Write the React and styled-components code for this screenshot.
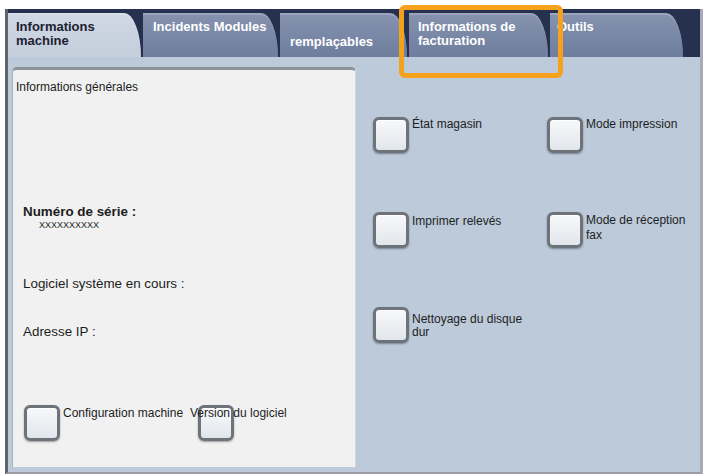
import styled, { createGlobalStyle } from "styled-components";

const GlobalStyle = createGlobalStyle`
  html, body {
    margin: 0;
    background: #ffffff;
  }
  body {
    font-family: "Liberation Sans", Arial, sans-serif;
  }
`;

const Frame = styled.div`
  position: relative;
  box-sizing: border-box;
  margin: 9px 7px 0 5px;
  height: 465px;
  display: flex;
  flex-direction: column;
  border-left: 3px solid #5f636a;
  border-right: 3px solid #a9aab8;
  border-bottom: 2px solid #9a9da4;
`;

const TabBar = styled.div`
  flex: none;
  height: 48px;
  box-sizing: border-box;
  padding-top: 4px;
  display: flex;
  gap: 2px;
  background: #25314e;
`;

const Tab = styled.div`
  flex: none;
  width: ${(p) => p.$w}px;
  box-sizing: border-box;
  padding: ${(p) => p.$top || 7}px 0 0 ${(p) => p.$pad || 9}px;
  border-top-right-radius: 17px 44px;
  background: ${(p) =>
    p.$active
      ? "linear-gradient(#d0d8e4, #c4cedc)"
      : "linear-gradient(#8593b0, #6f7d9e)"};
  box-shadow: inset 0 2px 0 rgba(255, 255, 255, 0.18);
  color: ${(p) => (p.$active ? "#1c2130" : "#ffffff")};
  font-size: 13px;
  font-weight: bold;
  line-height: 14px;
`;

const Highlight = styled.div`
  position: absolute;
  left: 391px;
  top: -4px;
  width: 164px;
  height: 73px;
  box-sizing: border-box;
  border: 5px solid #f6a11c;
  border-radius: 6px;
  pointer-events: none;
`;

const Content = styled.div`
  flex: 1;
  display: flex;
  padding: 10px 0 5px 4px;
  background: #bccada;
`;

const Panel = styled.div`
  flex: none;
  width: 344px;
  box-sizing: border-box;
  display: flex;
  flex-direction: column;
  background: #f1f1f1;
  border-top: 3px solid #8d929a;
  border-left: 1px solid #aab0b8;
  border-right: 1px solid #d3d7dc;
  border-radius: 5px 5px 0 0;
  color: #1b1d21;
`;

const PanelTitle = styled.div`
  margin: 10px 0 0 3px;
  font-size: 12px;
  line-height: 14px;
`;

const Field = styled.div`
  margin: ${(p) => p.$gap}px 0 0 10px;
  font-size: 13.4px;
  line-height: 16px;
  font-weight: ${(p) => (p.$bold ? "bold" : "normal")};
`;

const Serial = styled.div`
  margin-left: 26px;
  font-size: 9px;
  line-height: 10px;
`;

const PanelButtons = styled.div`
  display: flex;
  margin: 65px 0 0 11px;
`;

const ButtonGrid = styled.div`
  flex: 1;
  display: grid;
  grid-template-columns: 174px 174px;
  grid-auto-rows: 95px;
  align-content: start;
  padding: 50px 0 0 17px;
`;

const Option = styled.div`
  display: flex;
  align-items: flex-start;
  gap: 3px;
  width: ${(p) => (p.$w ? `${p.$w}px` : "auto")};
  flex: none;
`;

const Square = styled.div`
  flex: none;
  width: 36px;
  height: 36px;
  box-sizing: border-box;
  border: 3px solid #6d737b;
  border-radius: 6px;
  background: linear-gradient(#f7f8fa, #e2e6eb);
  box-shadow: 0 1px 2px rgba(0, 0, 0, 0.35), inset 0 1px 1px #ffffff;
`;

const Label = styled.div`
  padding-top: ${(p) => p.$top || 0}px;
  margin-left: ${(p) => p.$pull || 0}px;
  font-size: 12px;
  line-height: ${(p) => p.$leading || 13}px;
  color: #1c1e23;
  white-space: nowrap;
`;

const options = [
  { label: ["État magasin"], top: 1 },
  { label: ["Mode impression"], top: 1 },
  { label: ["Imprimer relevés"], top: 3 },
  { label: ["Mode de réception", "fax"], top: 1, leading: 15 },
  { label: ["Nettoyage du disque", "dur"], top: 6 },
];

export default function App() {
  return (
    <>
      <GlobalStyle />
      <Frame>
        <TabBar>
          <Tab $w={133} $active $pad={8}>
            Informations
            <br />
            machine
          </Tab>
          <Tab $w={135} $pad={10}>
            Incidents Modules
          </Tab>
          <Tab $w={127} $pad={10} $top={22}>
            remplaçables
          </Tab>
          <Tab $w={139} $pad={9}>
            Informations de
            <br />
            facturation
          </Tab>
          <Tab $w={133} $pad={7}>
            Outils
          </Tab>
        </TabBar>
        <Highlight />
        <Content>
          <Panel>
            <PanelTitle>Informations générales</PanelTitle>
            <Field $gap={110} $bold>
              Numéro de série :
            </Field>
            <Serial>XXXXXXXXXX</Serial>
            <Field $gap={46}>Logiciel système en cours :</Field>
            <Field $gap={32}>Adresse IP :</Field>
            <PanelButtons>
              <Option $w={174}>
                <Square />
                <Label $top={2}>Configuration machine</Label>
              </Option>
              <Option>
                <Square />
                <Label $top={2} $pull={-47}>
                  Version du logiciel
                </Label>
              </Option>
            </PanelButtons>
          </Panel>
          <ButtonGrid>
            {options.map((o) => (
              <Option key={o.label[0]}>
                <Square />
                <Label $top={o.top} $leading={o.leading}>
                  {o.label.map((line, i) => (
                    <div key={i}>{line}</div>
                  ))}
                </Label>
              </Option>
            ))}
          </ButtonGrid>
        </Content>
      </Frame>
    </>
  );
}
